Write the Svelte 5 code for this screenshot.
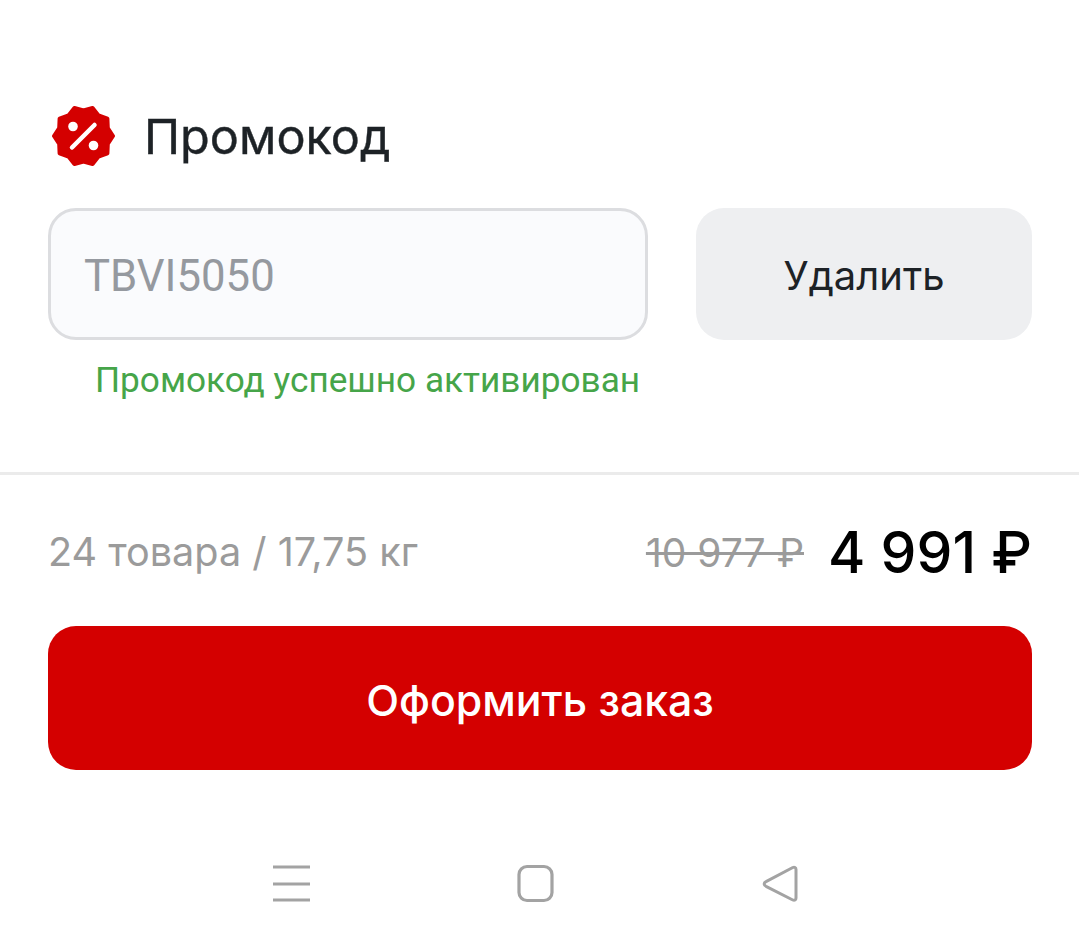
<script>
  // wavy 10-point badge outline
  const points = []
  for (let i = 0; i < 20; i++) {
    const r = i % 2 ? 25.5 : 29.5
    const a = (i * Math.PI) / 10
    points.push((31.5 + r * Math.cos(a)).toFixed(1) + ',' + (32 + r * Math.sin(a)).toFixed(1))
  }
  const badge = points.join(' ')
</script>

<div class="screen">
  <div class="promo-title">
    <svg class="badge" width="64" height="64" viewBox="0 0 64 64">
      <polygon points={badge} fill="#d40000" stroke="#d40000" stroke-width="4" stroke-linejoin="round" />
      <circle cx="21" cy="22.5" r="4.8" fill="#fff" />
      <circle cx="41.5" cy="41.5" r="4.8" fill="#fff" />
      <line x1="20" y1="43.5" x2="42.5" y2="21" stroke="#fff" stroke-width="4.5" stroke-linecap="round" />
    </svg>
    <h2>Промокод</h2>
  </div>

  <div class="promo-form">
    <div class="promo-input">TBVI5050</div>
    <button class="remove">Удалить</button>
  </div>
  <p class="promo-ok">Промокод успешно активирован</p>

  <div class="summary">
    <span class="amount">24 товара / 17,75 кг</span>
    <span class="prices">
      <s class="old-price">10 977 ₽</s>
      <span class="price">4 991 ₽</span>
    </span>
  </div>

  <div class="checkout-wrap">
    <button class="checkout">Оформить заказ</button>
  </div>

  <div class="navbar">
    <svg width="40" height="40" viewBox="0 0 40 40">
      <path d="M1 3h37M1 20h37M1 36h37" stroke="#a3a3a3" stroke-width="3.2" fill="none" />
    </svg>
    <svg width="40" height="40" viewBox="0 0 40 40">
      <rect x="3" y="2.5" width="33" height="34" rx="8" stroke="#a3a3a3" stroke-width="3.2" fill="none" />
    </svg>
    <svg width="40" height="40" viewBox="0 0 40 40">
      <path d="M36 5.5v28.5c0 2-1.6 2.8-3.2 2L6 22.3c-2.4-1.3-2.4-3.4 0-4.6L32.8 3.5c1.6-.8 3.2 0 3.2 2z" stroke="#a3a3a3" stroke-width="3" fill="none" stroke-linejoin="round" />
    </svg>
  </div>
</div>

<style>
  :global(body) {
    margin: 0;
    background: #fff;
  }

  .screen {
    height: 949px;
    overflow: hidden;
    font-family: Inter, "Liberation Sans", sans-serif;
    padding-top: 104px;
    box-sizing: border-box;
  }

  .promo-title {
    display: flex;
    align-items: center;
    gap: 28px;
    padding-left: 52px;
    height: 64px;
  }

  .promo-title h2 {
    margin: 0;
    font-size: 48.6px;
    font-weight: 400;
    color: #1d2226;
    -webkit-text-stroke: 0.4px #1d2226;
  }

  .promo-form {
    display: flex;
    gap: 48px;
    margin: 40px 47px 0 48px;
    height: 132px;
  }

  .promo-input {
    flex: 1;
    display: flex;
    align-items: center;
    box-sizing: border-box;
    padding: 4px 0 0 33px;
    background: #fafbfd;
    border: 3px solid #dcdde0;
    border-radius: 28px;
    font-family: Roboto, sans-serif;
    font-size: 43.7px;
    color: #95999f;
  }

  .remove {
    width: 336px;
    padding: 2px 0 0;
    border: none;
    border-radius: 28px;
    background: #eeeff1;
    font: 400 40px Inter, sans-serif;
    color: #1d2226;
  }

  .promo-ok {
    margin: 18px 0 0 95px;
    font-family: Roboto, sans-serif;
    font-size: 35.2px;
    line-height: 44px;
    color: #46a549;
  }

  .summary {
    display: flex;
    align-items: center;
    justify-content: space-between;
    margin-top: 70px;
    padding: 38px 47px 0 48px;
    height: 78px;
    border-top: 3px solid #ebebeb;
  }

  .amount {
    font-size: 39.6px;
    color: #9b9b9b;
  }

  .prices {
    display: flex;
    align-items: center;
    gap: 24px;
  }

  .old-price {
    font-size: 39px;
    color: #9b9b9b;
  }

  .price {
    font-size: 57px;
    font-weight: 500;
    color: #000;
  }

  .checkout-wrap {
    margin: 35px 47px 0 48px;
  }

  .checkout {
    width: 100%;
    height: 144px;
    padding: 4px 0 0;
    border: none;
    border-radius: 28px;
    background: #d40000;
    color: #fff;
    font: 500 42.8px Inter, sans-serif;
  }

  .navbar {
    display: flex;
    justify-content: space-between;
    padding: 0 279px 0 272px;
    margin-top: 94px;
  }
</style>
